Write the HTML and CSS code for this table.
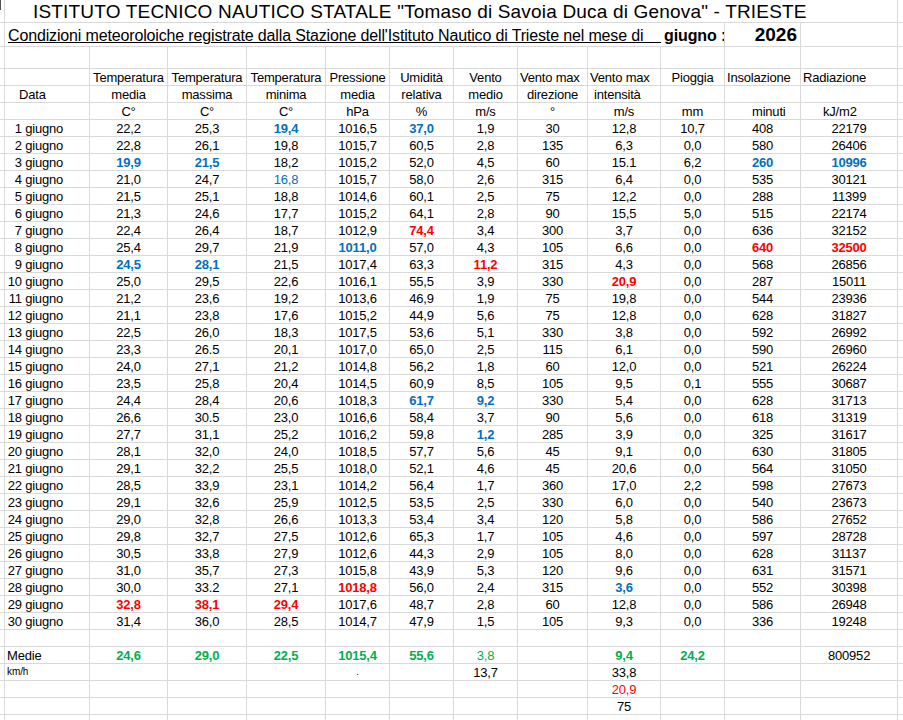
FILE: index.html
```html
<!DOCTYPE html>
<html lang="it">
<head>
<meta charset="utf-8">
<title>Condizioni meteorologiche - giugno 2026</title>
<link rel="stylesheet" href="styles.css">
</head>
<body>
<div class="wrap">
<table class="sheet">
<colgroup>
<col class="w0"><col class="wa"><col class="wb"><col class="wc"><col class="wd"><col class="we"><col class="wf"><col class="wg"><col class="wh"><col class="wi"><col class="wj"><col class="wk"><col class="wl"><col class="wm">
</colgroup>
<tbody>
<tr class="r-title"><td></td><td colspan="12" class="title">ISTITUTO TECNICO NAUTICO STATALE "Tomaso di Savoia Duca di Genova" - TRIESTE</td><td></td></tr>
<tr class="r-sub"><td></td><td colspan="9" class="sub">Condizioni meteoroloiche registrate dalla Stazione dell'Istituto Nautico di Trieste nel mese di&nbsp;&nbsp;&nbsp;&nbsp;&nbsp;&nbsp;&nbsp;&nbsp;&nbsp;&nbsp;&nbsp;&nbsp;&nbsp;&nbsp;&nbsp;&nbsp;</td><td class="mon">giugno :</td><td class="yr">2026</td><td></td><td></td></tr>
<tr class="r-gap"><td></td><td></td><td></td><td></td><td></td><td></td><td></td><td></td><td></td><td></td><td></td><td></td><td></td><td></td></tr>
<tr><td></td><td></td><td>Temperatura</td><td>Temperatura</td><td>Temperatura</td><td>Pressione</td><td>Umidità</td><td>Vento</td><td class="pl2">Vento max</td><td class="pl2">Vento max</td><td>Pioggia</td><td class="pl2">Insolazione</td><td class="pl2">Radiazione</td><td></td></tr>
<tr><td></td><td class="hdata">Data</td><td>media</td><td>massima</td><td>minima</td><td>media</td><td>relativa</td><td>medio</td><td>direzione</td><td class="pl6">intensità</td><td></td><td></td><td></td><td></td></tr>
<tr><td></td><td></td><td>C°</td><td>C°</td><td>C°</td><td>hPa</td><td>%</td><td>m/s</td><td>°</td><td>m/s</td><td>mm</td><td class="pl27">minuti</td><td class="pl22">kJ/m2</td><td></td></tr>
<tr><td></td><td class="day">1 giugno</td><td>22,2</td><td>25,3</td><td class="hb">19,4</td><td>1016,5</td><td class="hb">37,0</td><td>1,9</td><td>30</td><td>12,8</td><td>10,7</td><td>408</td><td>22179</td><td></td></tr>
<tr><td></td><td class="day">2 giugno</td><td>22,8</td><td>26,1</td><td>19,8</td><td>1015,7</td><td>60,5</td><td>2,8</td><td>135</td><td>6,3</td><td>0,0</td><td>580</td><td>26406</td><td></td></tr>
<tr><td></td><td class="day">3 giugno</td><td class="hb">19,9</td><td class="hb">21,5</td><td>18,2</td><td>1015,2</td><td>52,0</td><td>4,5</td><td>60</td><td>15.1</td><td>6,2</td><td class="hb">260</td><td class="hb">10996</td><td></td></tr>
<tr><td></td><td class="day">4 giugno</td><td>21,0</td><td>24,7</td><td class="lb">16,8</td><td>1015,7</td><td>58,0</td><td>2,6</td><td>315</td><td>6,4</td><td>0,0</td><td>535</td><td>30121</td><td></td></tr>
<tr><td></td><td class="day">5 giugno</td><td>21,5</td><td>25,1</td><td>18,8</td><td>1014,6</td><td>60,1</td><td>2,5</td><td>75</td><td>12,2</td><td>0,0</td><td>288</td><td>11399</td><td></td></tr>
<tr><td></td><td class="day">6 giugno</td><td>21,3</td><td>24,6</td><td>17,7</td><td>1015,2</td><td>64,1</td><td>2,8</td><td>90</td><td>15,5</td><td>5,0</td><td>515</td><td>22174</td><td></td></tr>
<tr><td></td><td class="day">7 giugno</td><td>22,4</td><td>26,4</td><td>18,7</td><td>1012,9</td><td class="hr">74,4</td><td>3,4</td><td>300</td><td>3,7</td><td>0,0</td><td>636</td><td>32152</td><td></td></tr>
<tr><td></td><td class="day">8 giugno</td><td>25,4</td><td>29,7</td><td>21,9</td><td class="hb">1011,0</td><td>57,0</td><td>4,3</td><td>105</td><td>6,6</td><td>0,0</td><td class="hr">640</td><td class="hr">32500</td><td></td></tr>
<tr><td></td><td class="day">9 giugno</td><td class="hb">24,5</td><td class="hb">28,1</td><td>21,5</td><td>1017,4</td><td>63,3</td><td class="hr">11,2</td><td>315</td><td>4,3</td><td>0,0</td><td>568</td><td>26856</td><td></td></tr>
<tr><td></td><td class="day">10 giugno</td><td>25,0</td><td>29,5</td><td>22,6</td><td>1016,1</td><td>55,5</td><td>3,9</td><td>330</td><td class="hr">20,9</td><td>0,0</td><td>287</td><td>15011</td><td></td></tr>
<tr><td></td><td class="day">11 giugno</td><td>21,2</td><td>23,6</td><td>19,2</td><td>1013,6</td><td>46,9</td><td>1,9</td><td>75</td><td>19,8</td><td>0,0</td><td>544</td><td>23936</td><td></td></tr>
<tr><td></td><td class="day">12 giugno</td><td>21,1</td><td>23,8</td><td>17,6</td><td>1015,2</td><td>44,9</td><td>5,6</td><td>75</td><td>12,8</td><td>0,0</td><td>628</td><td>31827</td><td></td></tr>
<tr><td></td><td class="day">13 giugno</td><td>22,5</td><td>26,0</td><td>18,3</td><td>1017,5</td><td>53,6</td><td>5,1</td><td>330</td><td>3,8</td><td>0,0</td><td>592</td><td>26992</td><td></td></tr>
<tr><td></td><td class="day">14 giugno</td><td>23,3</td><td>26.5</td><td>20,1</td><td>1017,0</td><td>65,0</td><td>2,5</td><td>115</td><td>6,1</td><td>0,0</td><td>590</td><td>26960</td><td></td></tr>
<tr><td></td><td class="day">15 giugno</td><td>24,0</td><td>27,1</td><td>21,2</td><td>1014,8</td><td>56,2</td><td>1,8</td><td>60</td><td>12,0</td><td>0,0</td><td>521</td><td>26224</td><td></td></tr>
<tr><td></td><td class="day">16 giugno</td><td>23,5</td><td>25,8</td><td>20,4</td><td>1014,5</td><td>60,9</td><td>8,5</td><td>105</td><td>9,5</td><td>0,1</td><td>555</td><td>30687</td><td></td></tr>
<tr><td></td><td class="day">17 giugno</td><td>24,4</td><td>28,4</td><td>20,6</td><td>1018,3</td><td class="hb">61,7</td><td class="hb">9,2</td><td>330</td><td>5,4</td><td>0,0</td><td>628</td><td>31713</td><td></td></tr>
<tr><td></td><td class="day">18 giugno</td><td>26,6</td><td>30.5</td><td>23,0</td><td>1016,6</td><td>58,4</td><td>3,7</td><td>90</td><td>5,6</td><td>0,0</td><td>618</td><td>31319</td><td></td></tr>
<tr><td></td><td class="day">19 giugno</td><td>27,7</td><td>31,1</td><td>25,2</td><td>1016,2</td><td>59,8</td><td class="hb">1,2</td><td>285</td><td>3,9</td><td>0,0</td><td>325</td><td>31617</td><td></td></tr>
<tr><td></td><td class="day">20 giugno</td><td>28,1</td><td>32,0</td><td>24,0</td><td>1018,5</td><td>57,7</td><td>5,6</td><td>45</td><td>9,1</td><td>0,0</td><td>630</td><td>31805</td><td></td></tr>
<tr><td></td><td class="day">21 giugno</td><td>29,1</td><td>32,2</td><td>25,5</td><td>1018,0</td><td>52,1</td><td>4,6</td><td>45</td><td>20,6</td><td>0,0</td><td>564</td><td>31050</td><td></td></tr>
<tr><td></td><td class="day">22 giugno</td><td>28,5</td><td>33,9</td><td>23,1</td><td>1014,2</td><td>56,4</td><td>1,7</td><td>360</td><td>17,0</td><td>2,2</td><td>598</td><td>27673</td><td></td></tr>
<tr><td></td><td class="day">23 giugno</td><td>29,1</td><td>32,6</td><td>25,9</td><td>1012,5</td><td>53,5</td><td>2,5</td><td>330</td><td>6,0</td><td>0,0</td><td>540</td><td>23673</td><td></td></tr>
<tr><td></td><td class="day">24 giugno</td><td>29,0</td><td>32,8</td><td>26,6</td><td>1013,3</td><td>53,4</td><td>3,4</td><td>120</td><td>5,8</td><td>0,0</td><td>586</td><td>27652</td><td></td></tr>
<tr><td></td><td class="day">25 giugno</td><td>29,8</td><td>32,7</td><td>27,5</td><td>1012,6</td><td>65,3</td><td>1,7</td><td>105</td><td>4,6</td><td>0,0</td><td>597</td><td>28728</td><td></td></tr>
<tr><td></td><td class="day">26 giugno</td><td>30,5</td><td>33,8</td><td>27,9</td><td>1012,6</td><td>44,3</td><td>2,9</td><td>105</td><td>8,0</td><td>0,0</td><td>628</td><td>31137</td><td></td></tr>
<tr><td></td><td class="day">27 giugno</td><td>31,0</td><td>35,7</td><td>27,3</td><td>1015,8</td><td>43,9</td><td>5,3</td><td>120</td><td>9,6</td><td>0,0</td><td>631</td><td>31571</td><td></td></tr>
<tr><td></td><td class="day">28 giugno</td><td>30,0</td><td>33.2</td><td>27,1</td><td class="hr">1018,8</td><td>56,0</td><td>2,4</td><td>315</td><td class="hb">3,6</td><td>0,0</td><td>552</td><td>30398</td><td></td></tr>
<tr><td></td><td class="day">29 giugno</td><td class="hr">32,8</td><td class="hr">38,1</td><td class="hr">29,4</td><td>1017,6</td><td>48,7</td><td>2,8</td><td>60</td><td>12,8</td><td>0,0</td><td>586</td><td>26948</td><td></td></tr>
<tr><td></td><td class="day">30 giugno</td><td>31,4</td><td>36,0</td><td>28,5</td><td>1014,7</td><td>47,9</td><td>1,5</td><td>105</td><td>9,3</td><td>0,0</td><td>336</td><td>19248</td><td></td></tr>
<tr><td></td><td></td><td></td><td></td><td></td><td></td><td></td><td></td><td></td><td></td><td></td><td></td><td></td><td></td></tr>
<tr><td></td><td class="lbl">Medie</td><td class="gb">24,6</td><td class="gb">29,0</td><td class="gb">22,5</td><td class="gb">1015,4</td><td class="gb">55,6</td><td class="gr">3,8</td><td></td><td class="gb">9,4</td><td class="gb">24,2</td><td></td><td>800952</td><td></td></tr>
<tr><td></td><td class="small">km/h</td><td></td><td></td><td></td><td class="dot">.</td><td></td><td>13,7</td><td></td><td>33,8</td><td></td><td></td><td></td><td></td></tr>
<tr><td></td><td></td><td></td><td></td><td></td><td></td><td></td><td></td><td></td><td class="rr">20,9</td><td></td><td></td><td></td><td></td></tr>
<tr><td></td><td></td><td></td><td></td><td></td><td></td><td></td><td></td><td></td><td>75</td><td></td><td></td><td></td><td></td></tr>
<tr><td></td><td></td><td></td><td></td><td></td><td></td><td></td><td></td><td></td><td></td><td></td><td></td><td></td><td></td></tr>
</tbody>
</table>
</div>
</body>
</html>
```
FILE: styles.css
```css
html, body {
  margin: 0;
  padding: 0;
  background: #ffffff;
  overflow: hidden;
}

.wrap {
  position: relative;
  width: 903px;
  height: 720px;
  overflow: hidden;
}

.wrap::before {
  content: "";
  position: absolute;
  left: 0;
  top: 0;
  width: 1px;
  height: 10px;
  background: #505050;
}

.sheet {
  border-collapse: separate;
  border-spacing: 0;
  table-layout: fixed;
  width: 928px;
  font-family: "Liberation Sans", Arial, sans-serif;
  font-size: 13px;
  letter-spacing: -0.2px;
  color: #000000;
}

.w0 { width: 5px; }
.wa { width: 85px; }
.wb { width: 78px; }
.wc { width: 79px; }
.wd { width: 79px; }
.we { width: 64px; }
.wf { width: 64px; }
.wg { width: 64px; }
.wh { width: 70px; }
.wi { width: 73px; }
.wj { width: 64px; }
.wk { width: 76px; }
.wl { width: 97px; }
.wm { width: 30px; }

.sheet td {
  box-sizing: border-box;
  height: 17px;
  padding: 0 0 2px 0;
  border-right: 1px solid #d9d9d9;
  border-bottom: 1px solid #d9d9d9;
  text-align: center;
  vertical-align: bottom;
  line-height: 11px;
  white-space: nowrap;
}

.sheet .r-title td { height: 23px; }
.sheet .r-sub td { height: 24px; }
.sheet .r-gap td { height: 22px; }

.sheet .title {
  text-align: left;
  padding-left: 28px;
  padding-bottom: 2px;
  font-size: 19px;
  letter-spacing: 0.18px;
  line-height: 17px;
}

.sheet .sub {
  text-align: left;
  padding-left: 3px;
  padding-bottom: 2px;
  font-size: 16px;
  letter-spacing: -0.15px;
  line-height: 16px;
  text-decoration: underline;
  white-space: pre;
  overflow: hidden;
  border-right: none;
}

.sheet .mon {
  text-align: left;
  padding-left: 3px;
  font-size: 16px;
  font-weight: bold;
  letter-spacing: -0.1px;
  line-height: 16px;
  overflow: hidden;
}

.sheet .yr {
  text-align: right;
  padding-right: 3px;
  font-size: 19px;
  font-weight: bold;
  letter-spacing: 0;
  line-height: 18px;
}

.sheet .day {
  text-align: right;
  padding-right: 26px;
}

.sheet .hdata {
  text-align: left;
  padding-left: 14px;
}

.sheet .lbl {
  text-align: left;
  padding-left: 2px;
}

.sheet .small {
  text-align: left;
  padding-left: 2px;
  font-size: 10px;
  letter-spacing: -0.1px;
  line-height: 13px;
}

.sheet .dot {
  font-size: 9px;
  line-height: 12px;
}

.sheet .pl2 { text-align: left; padding-left: 2px; }
.sheet .pl6 { text-align: left; padding-left: 6px; }
.sheet .pl22 { text-align: left; padding-left: 22px; }
.sheet .pl27 { text-align: left; padding-left: 27px; }

.hb { color: #0070c0; font-weight: bold; }
.lb { color: #0070c0; }
.hr { color: #ff0000; font-weight: bold; }
.rr { color: #ff0000; }
.gb { color: #00b050; font-weight: bold; }
.gr { color: #00b050; }
```
